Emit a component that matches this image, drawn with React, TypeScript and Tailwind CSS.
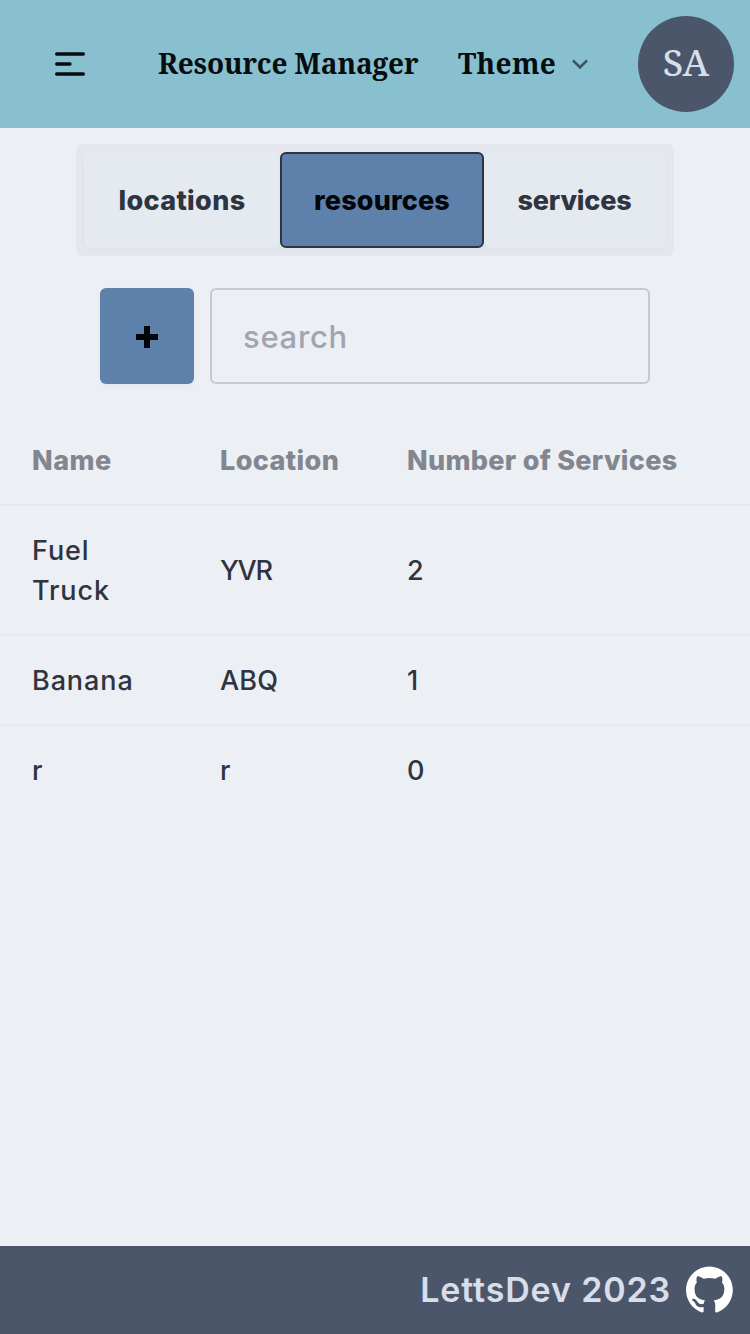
import { Fragment } from "react";

const serif = "font-['Noto_Serif','DejaVu_Serif_Condensed',serif]";

const tabs = [
  { label: "locations", className: "w-[196px] border-transparent bg-[#e5e9f0] text-[#2e3440] tracking-[0.35px]" },
  { label: "resources", className: "w-[204px] border-[#2e3440] bg-[#5e81ac] text-[#030609] tracking-[0.15px]" },
  { label: "services", className: "w-[182px] border-transparent bg-[#e5e9f0] pr-px text-[#2e3440] tracking-[-0.2px]" },
];

type Cell = { lines: string[]; className: string };

const rows: Cell[][] = [
  [
    { lines: ["Fuel", "Truck"], className: "tracking-[0.9px]" },
    { lines: ["YVR"], className: "tracking-[-1.2px]" },
    { lines: ["2"], className: "" },
  ],
  [
    { lines: ["Banana"], className: "tracking-[0.9px]" },
    { lines: ["ABQ"], className: "tracking-[0.2px]" },
    { lines: ["1"], className: "" },
  ],
  [
    { lines: ["r"], className: "" },
    { lines: ["r"], className: "" },
    { lines: ["0"], className: "" },
  ],
];

function MenuIcon() {
  return (
    <svg className="size-10" viewBox="0 0 24 24" fill="none" stroke="currentColor" strokeWidth="2" strokeLinecap="round" strokeLinejoin="round">
      <path d="M4 6h16M4 12h8m-8 6h16" />
    </svg>
  );
}

function ChevronIcon() {
  return (
    <svg className="ml-2 size-8 opacity-60" viewBox="0 0 24 24" fill="currentColor">
      <path d="M7.41,8.59L12,13.17L16.59,8.59L18,10L12,16L6,10L7.41,8.59Z" />
    </svg>
  );
}

function GithubIcon() {
  return (
    <svg className="mr-px mb-0.5 h-[47px] w-[47px]" viewBox="0 0 98 96" fill="white">
      <path
        fillRule="evenodd"
        clipRule="evenodd"
        d="M48.854 0C21.839 0 0 22 0 49.217c0 21.756 13.993 40.172 33.405 46.69 2.427.49 3.316-1.059 3.316-2.362 0-1.141-.08-5.052-.08-9.127-13.59 2.934-16.42-5.867-16.42-5.867-2.184-5.704-5.42-7.17-5.42-7.17-4.448-3.015.324-3.015.324-3.015 4.934.326 7.523 5.052 7.523 5.052 4.367 7.496 11.404 5.378 14.235 4.074.404-3.178 1.699-5.378 3.074-6.6-10.839-1.141-22.243-5.378-22.243-24.283 0-5.378 1.94-9.778 5.014-13.2-.485-1.222-2.184-6.275.486-13.038 0 0 4.125-1.304 13.426 5.052a46.97 46.97 0 0 1 12.214-1.63c4.125 0 8.33.571 12.213 1.63 9.302-6.356 13.427-5.052 13.427-5.052 2.67 6.763.97 11.816.485 13.038 3.155 3.422 5.015 7.822 5.015 13.2 0 18.905-11.404 23.06-22.324 24.283 1.78 1.548 3.316 4.481 3.316 9.126 0 6.6-.08 11.897-.08 13.526 0 1.304.89 2.853 3.316 2.364 19.412-6.52 33.405-24.935 33.405-46.691C97.707 22 75.788 0 48.854 0z"
      />
      <path d="M14 69.500c6 0 7 5 10 8.500s7 4.500 13 3.500" fill="none" stroke="#4c566a" strokeWidth="5" />
    </svg>
  );
}

export default function App() {
  return (
    <div className="flex h-[1334px] w-[750px] flex-col bg-[#eceff4] font-['Inter',sans-serif] text-[#2e3440]">
      <header className={`flex h-32 items-center bg-[#88c0d0] pr-4 pl-[50px] text-[#070d0e] ${serif}`}>
        <button aria-label="Menu">
          <MenuIcon />
        </button>
        <h1 className="ml-[68px] w-[300px] pb-0.5 text-[28px] font-bold tracking-[-0.18px] whitespace-nowrap">Resource Manager</h1>
        <button className="flex items-center text-[28px] font-bold">
          <span className="w-[98px] pb-0.5 text-left tracking-[0.3px]">Theme</span>
          <ChevronIcon />
        </button>
        <div className="ml-auto flex size-24 items-center justify-center rounded-full bg-[#4c566a] pb-1 text-[37px] font-medium tracking-[0.2px] text-[#d8dee9]">SA</div>
      </header>

      <main className="flex flex-1 flex-col">
        <nav className="mx-auto mt-4 flex rounded-md bg-[#e4e8ee] p-2">
          {tabs.map((tab) => (
            <button key={tab.label} className={`h-24 rounded-md border-2 pt-0.5 text-center text-[27px] font-extrabold shadow-[0_2px_4px_rgba(46,52,64,0.04)] ${tab.className}`}>
              {tab.label}
            </button>
          ))}
        </nav>

        <div className="mt-8 flex justify-center gap-4">
          <button aria-label="Add" className="flex h-24 w-[94px] items-center justify-center rounded-md bg-[#5e81ac] pt-0.5 text-[#030609] shadow-[0_2px_4px_rgba(46,52,64,0.04)]">
            <svg className="size-[22px]" viewBox="0 0 22 22" fill="none" stroke="currentColor" strokeWidth="6">
              <path d="M11 0v22M0 11h22" />
            </svg>
          </button>
          <input
            placeholder="search"
            className="h-24 w-[440px] rounded-md border-2 border-[#c7cad0] bg-transparent px-[31px] text-[31px] font-medium tracking-[0.7px] placeholder:text-[#9fa5b1]"
          />
        </div>

        <div className="mt-8 grid grid-cols-[188px_187px_375px] text-[27px] leading-10">
          <div className="border-b-2 border-[#e5e9ee] pt-[25px] pb-[23px] pl-8 font-extrabold tracking-[0.5px] text-[#82868f]">Name</div>
          <div className="border-b-2 border-[#e5e9ee] pt-[25px] pb-[23px] pl-8 font-extrabold tracking-[0.4px] text-[#82868f]">Location</div>
          <div className="border-b-2 border-[#e5e9ee] pt-[25px] pb-[23px] pl-8 font-extrabold tracking-[0.3px] text-[#82868f]">Number of Services</div>
          {rows.map((row, r) => (
            <Fragment key={r}>
              {row.map((cell, c) => (
                <div
                  key={c}
                  className={`flex flex-col justify-center pt-[25px] pb-[23px] pl-8 font-medium ${r < rows.length - 1 ? "border-b-2 border-[#e5e9ee]" : ""} ${cell.className}`}
                >
                  {cell.lines.map((line) => (
                    <span key={line}>{line}</span>
                  ))}
                </div>
              ))}
            </Fragment>
          ))}
        </div>
      </main>

      <footer className="flex h-[88px] items-center justify-end gap-[15px] bg-[#4c566a] pr-4 text-[#d8dee9]">
        <p className="pb-px text-[34px] font-semibold tracking-[0.85px]">LettsDev 2023</p>
        <GithubIcon />
      </footer>
    </div>
  );
}
